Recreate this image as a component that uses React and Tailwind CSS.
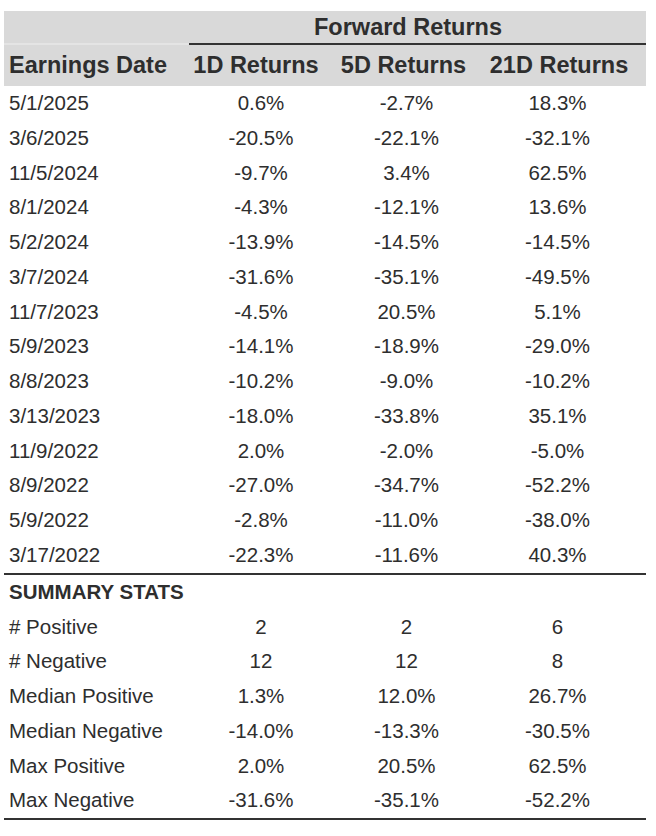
const rows = [
  ["5/1/2025", "0.6%", "-2.7%", "18.3%"],
  ["3/6/2025", "-20.5%", "-22.1%", "-32.1%"],
  ["11/5/2024", "-9.7%", "3.4%", "62.5%"],
  ["8/1/2024", "-4.3%", "-12.1%", "13.6%"],
  ["5/2/2024", "-13.9%", "-14.5%", "-14.5%"],
  ["3/7/2024", "-31.6%", "-35.1%", "-49.5%"],
  ["11/7/2023", "-4.5%", "20.5%", "5.1%"],
  ["5/9/2023", "-14.1%", "-18.9%", "-29.0%"],
  ["8/8/2023", "-10.2%", "-9.0%", "-10.2%"],
  ["3/13/2023", "-18.0%", "-33.8%", "35.1%"],
  ["11/9/2022", "2.0%", "-2.0%", "-5.0%"],
  ["8/9/2022", "-27.0%", "-34.7%", "-52.2%"],
  ["5/9/2022", "-2.8%", "-11.0%", "-38.0%"],
  ["3/17/2022", "-22.3%", "-11.6%", "40.3%"],
];

const stats = [
  ["# Positive", "2", "2", "6"],
  ["# Negative", "12", "12", "8"],
  ["Median Positive", "1.3%", "12.0%", "26.7%"],
  ["Median Negative", "-14.0%", "-13.3%", "-30.5%"],
  ["Max Positive", "2.0%", "20.5%", "62.5%"],
  ["Max Negative", "-31.6%", "-35.1%", "-52.2%"],
];

const cols = "grid grid-cols-[185px_144px_147px_1fr]";

function Row({ cells }) {
  return (
    <div className={`${cols} h-[34.75px] items-center text-[20.5px] text-[#2e2e2e]`}>
      <div className="pl-[5px]">{cells[0]}</div>
      <div className="text-center">{cells[1]}</div>
      <div className="text-center">{cells[2]}</div>
      <div className="text-center pr-[11px]">{cells[3]}</div>
    </div>
  );
}

export default function App() {
  return (
    <div
      className="min-h-screen bg-white pt-[11px] pl-[4px] pr-[10px]"
      style={{ fontFamily: '"Liberation Sans", Arial, sans-serif' }}
    >
      <div className="bg-[#d9d9d9] text-[#2e2e2e] font-bold text-[23.5px]">
        <div className="grid grid-cols-[185px_1fr]">
          <div className="border-b-2 border-[#e4e4e4]" />
          <div className="h-[34px] flex items-center pt-[2px] pl-[125px] border-b-2 border-[#333]">
            Forward Returns
          </div>
        </div>
        <div className={`${cols} h-[41px] items-center`}>
          <div className="pl-[5px] whitespace-nowrap">Earnings Date</div>
          <div className="text-center pr-[10px] whitespace-nowrap">1D Returns</div>
          <div className="text-center pr-[6px] whitespace-nowrap">5D Returns</div>
          <div className="text-center pr-[8px] whitespace-nowrap">21D Returns</div>
        </div>
      </div>
      <div>
        {rows.map((r) => (
          <Row key={r[0]} cells={r} />
        ))}
      </div>
      <div className="border-t-2 border-[#333]">
        <div className="h-[35px] flex items-center pl-[5px] font-bold text-[20.5px] text-[#2e2e2e]">
          SUMMARY STATS
        </div>
        {stats.map((r) => (
          <Row key={r[0]} cells={r} />
        ))}
      </div>
      <div className="border-t-2 border-[#333]" />
    </div>
  );
}
